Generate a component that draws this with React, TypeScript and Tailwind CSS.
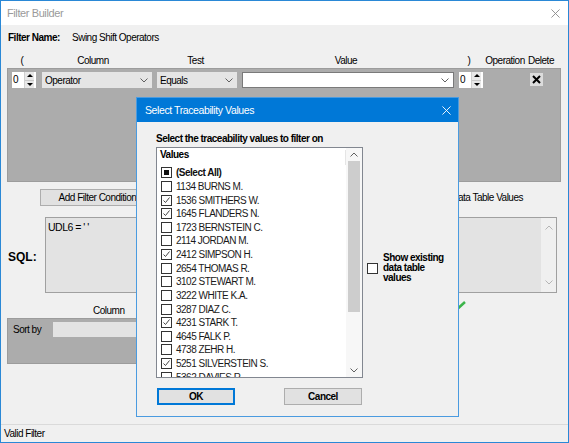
import React from 'react';

type CheckState = 'on' | 'off' | 'mixed';

const values: { label: string; state: CheckState }[] = [
  { label: '1134 BURNS M.', state: 'off' },
  { label: '1536 SMITHERS W.', state: 'on' },
  { label: '1645 FLANDERS N.', state: 'on' },
  { label: '1723 BERNSTEIN C.', state: 'off' },
  { label: '2114 JORDAN M.', state: 'off' },
  { label: '2412 SIMPSON H.', state: 'on' },
  { label: '2654 THOMAS R.', state: 'off' },
  { label: '3102 STEWART M.', state: 'off' },
  { label: '3222 WHITE K.A.', state: 'off' },
  { label: '3287 DIAZ C.', state: 'off' },
  { label: '4231 STARK T.', state: 'on' },
  { label: '4645 FALK P.', state: 'off' },
  { label: '4738 ZEHR H.', state: 'off' },
  { label: '5251 SILVERSTEIN S.', state: 'on' },
  { label: '5362 DAVIES R.', state: 'off' },
];

const Chevron = ({ up = false, color = '#606060' }: { up?: boolean; color?: string }) => (
  <svg width="8" height="5" viewBox="0 0 8 5" className="shrink-0">
    <polyline
      points={up ? '0.5,4.5 4,1 7.5,4.5' : '0.5,0.5 4,4 7.5,0.5'}
      fill="none"
      stroke={color}
      strokeWidth="1"
    />
  </svg>
);

const CloseX = ({ color, size = 10 }: { color: string; size?: number }) => (
  <svg width={size} height={size} viewBox="0 0 10 10" className="shrink-0">
    <path d="M0.5 0.5 L9.5 9.5 M9.5 0.5 L0.5 9.5" stroke={color} strokeWidth="1" />
  </svg>
);

const Check = ({ state }: { state: CheckState }) => (
  <span className="w-[11px] h-[11px] border border-[#333] bg-white flex items-center justify-center shrink-0">
    {state === 'on' && (
      <svg width="9" height="9" viewBox="0 0 9 9">
        <path d="M1.5 4.5 L3.5 6.5 L7.5 1.5" fill="none" stroke="#444" strokeWidth="1" />
      </svg>
    )}
    {state === 'mixed' && <span className="w-[5px] h-[5px] bg-[#111]" />}
  </span>
);

const Spinner = () => (
  <div className="w-[24px] h-[16px] bg-white flex shrink-0">
    <span className="flex-1 pl-[1px] leading-[15px]">0</span>
    <div className="w-[10px] flex flex-col border-l border-[#d0d0d0] bg-[#e8e8e8] mr-[2px]">
      <div className="flex-1 flex items-center justify-center border-b border-[#c8c8c8]">
        <span className="w-0 h-0 border-l-[3px] border-r-[3px] border-b-[3px] border-l-transparent border-r-transparent border-b-black" />
      </div>
      <div className="flex-1 flex items-center justify-center">
        <span className="w-0 h-0 border-l-[3px] border-r-[3px] border-t-[3px] border-l-transparent border-r-transparent border-t-black" />
      </div>
    </div>
  </div>
);

const Combo = ({ text, width, white = false }: { text: string; width: string; white?: boolean }) => (
  <div
    className={`${width} h-[16px] flex items-center pl-[3px] pr-[4px] shrink-0 ${
      white ? 'bg-white border border-[#7a7a7a]' : 'bg-[#e5e5e5]'
    }`}
  >
    <span className="flex-1 truncate">{text}</span>
    <Chevron />
  </div>
);

export default function App() {
  return (
    <div className="w-[569px] h-[443px] relative flex flex-col border border-[#2a88d6] bg-[#f0f0f0] overflow-hidden text-[10px] leading-[13px] tracking-[-0.5px] text-black [font-family:'Liberation_Sans',Arial,sans-serif]">
      {/* Title bar */}
      <div className="h-[24px] bg-white flex items-center pl-[6px] pr-[8px] shrink-0">
        <span className="text-[11px] tracking-[-0.4px] text-[#9a9a9a]">Filter Builder</span>
        <span className="ml-auto">
          <CloseX color="#8a8a8a" size={9} />
        </span>
      </div>

      {/* Filter name */}
      <div className="flex items-center h-[13px] mt-[6px] pl-[7px]">
        <span className="font-bold w-[64px]">Filter Name:</span>
        <span>Swing Shift Operators</span>
      </div>

      {/* Column headers */}
      <div className="flex items-center h-[13px] mt-[10px] pl-[11px] whitespace-nowrap">
        <span className="w-[20px] flex justify-center">(</span>
        <span className="w-[122px] flex justify-center">Column</span>
        <span className="w-[83px] flex justify-center">Test</span>
        <span className="w-[218px] flex justify-center">Value</span>
        <span className="w-[28px] flex justify-center">)</span>
        <span className="w-[44px] flex justify-center">Operation</span>
        <span className="w-[28px] flex justify-center">Delete</span>
      </div>

      {/* Condition grid */}
      <div className="ml-[6px] mr-[7px] mt-[1px] h-[114px] bg-[#acacac] border border-[#9c9c9c] pt-[3px] pl-[4px] shrink-0">
        <div className="flex items-start">
          <Spinner />
          <div className="ml-[6px]">
            <Combo text="Operator" width="w-[110px]" />
          </div>
          <div className="ml-[5px]">
            <Combo text="Equals" width="w-[80px]" />
          </div>
          <div className="ml-[5px]">
            <Combo text="" width="w-[212px]" white />
          </div>
          <div className="ml-[5px]">
            <Spinner />
          </div>
          <div className="ml-[47px] mt-[1px] w-[13px] h-[13px] bg-[#dcdcdc] flex items-center justify-center">
            <svg width="9" height="9" viewBox="0 0 9 9">
              <path d="M1 1 L8 8 M8 1 L1 8" stroke="#000" strokeWidth="2" />
            </svg>
          </div>
        </div>
      </div>

      {/* Add condition row */}
      <div className="flex items-center mt-[7px] h-[17px]">
        <button className="ml-[39px] w-[115px] h-[17px] bg-[#e1e1e1] border border-[#adadad] leading-[15px]">
          Add Filter Condition
        </button>
        <span className="ml-auto mr-[45px]">Show Data Table Values</span>
      </div>

      {/* SQL */}
      <div className="flex items-center mt-[11px]">
        <span className="w-[44px] pl-[7px] mt-[5px] text-[12px] tracking-normal font-bold">SQL:</span>
        <div className="w-[512px] h-[76px] border border-[#a0a0a0] bg-[#e3e3e3] flex">
          <div className="flex-1 pl-[2px] pt-[3px] leading-[13px] text-[10.5px]">UDL6 = ' '</div>
          <div className="w-[15px] bg-[#f0f0f0] flex flex-col items-center justify-between py-[7px]">
            <Chevron up color="#b5b5b5" />
            <Chevron color="#b5b5b5" />
          </div>
        </div>
      </div>

      {/* Sort header */}
      <div className="flex items-center mt-[11px] h-[13px]">
        <span className="w-[120px] pl-[92px]">Column</span>
        <svg width="20" height="14" viewBox="0 0 20 14" className="ml-[326px] -mt-[8px]">
          <path d="M2 8 L7 12 L18 2" fill="none" stroke="#3cb44a" strokeWidth="2.5" />
        </svg>
      </div>

      {/* Sort panel */}
      <div className="ml-[6px] mt-[1px] w-[440px] h-[46px] bg-[#acacac] border border-[#9c9c9c] pt-[3px]">
        <div className="flex items-center">
          <span className="w-[45px] pl-[5px]">Sort by</span>
          <div className="w-[385px] h-[15px] bg-[#e3e3e3]" />
        </div>
      </div>

      {/* Status bar */}
      <div className="mt-auto h-[18px] border-t border-[#dadada] flex items-center pl-[3px]">
        Valid Filter
      </div>

      {/* Modal dialog */}
      <div className="absolute left-[135px] top-[96px] w-[323px] h-[320px] border border-[#4a9be0] bg-[#f0f0f0] flex flex-col">
        <div className="h-[24px] bg-[#0078d7] flex items-center pl-[8px] pr-[7px] shrink-0">
          <span className="text-[10.5px] tracking-[-0.4px] text-white">Select Traceability Values</span>
          <span className="ml-auto">
            <CloseX color="#ffffff" size={9} />
          </span>
        </div>
        <div className="pl-[19px] pt-[11px] flex flex-col">
          <span className="h-[12px] leading-[12px] font-bold whitespace-nowrap">
            Select the traceability values to filter on
          </span>
          <div className="flex items-start mt-[2px]">
            <div className="w-[207px] h-[231px] border border-[#828790] bg-white flex overflow-hidden">
              <div className="flex-1 flex flex-col overflow-hidden">
                <div className="h-[18px] shrink-0 flex items-start">
                  <span className="flex-1 pl-[3px] leading-[13px] font-bold">Values</span>
                  <span className="w-px h-[15px] mt-[2px] bg-[#e5e5e5]" />
                </div>
                <div className="h-[13.64px] shrink-0 flex items-center pl-[4px] gap-[4px] text-[#111]">
                  <Check state="mixed" />
                  <span className="font-bold whitespace-nowrap">(Select All)</span>
                </div>
                {values.map((v) => (
                  <div
                    key={v.label}
                    className="h-[13.64px] shrink-0 flex items-center pl-[4px] gap-[4px] text-[#1a1a1a]"
                  >
                    <Check state={v.state} />
                    <span className="whitespace-nowrap">{v.label}</span>
                  </div>
                ))}
              </div>
              <div className="w-[16px] bg-[#f7f7f7] flex flex-col items-center shrink-0">
                <div className="h-[13px] w-full flex items-center justify-center">
                  <Chevron up />
                </div>
                <div className="w-[12px] h-[151px] bg-[#cdcdcd]" />
                <div className="flex-1" />
                <div className="h-[13px] w-full flex items-center justify-center">
                  <Chevron />
                </div>
              </div>
            </div>
            <div className="ml-[4px] mt-[106px] flex items-center gap-[5px]">
              <span className="w-[11px] h-[11px] border border-[#333] bg-white shrink-0" />
              <span className="font-bold leading-[10px] whitespace-nowrap">
                Show existing
                <br />
                data table
                <br />
                values
              </span>
            </div>
          </div>
          <div className="flex mt-[10px] ml-[1px]">
            <button className="w-[78px] h-[17px] bg-[#e1e1e1] border-2 border-[#0078d7] font-bold leading-[13px]">
              OK
            </button>
            <button className="ml-[49px] w-[78px] h-[17px] bg-[#e1e1e1] border border-[#adadad] font-bold leading-[15px]">
              Cancel
            </button>
          </div>
        </div>
      </div>
    </div>
  );
}
